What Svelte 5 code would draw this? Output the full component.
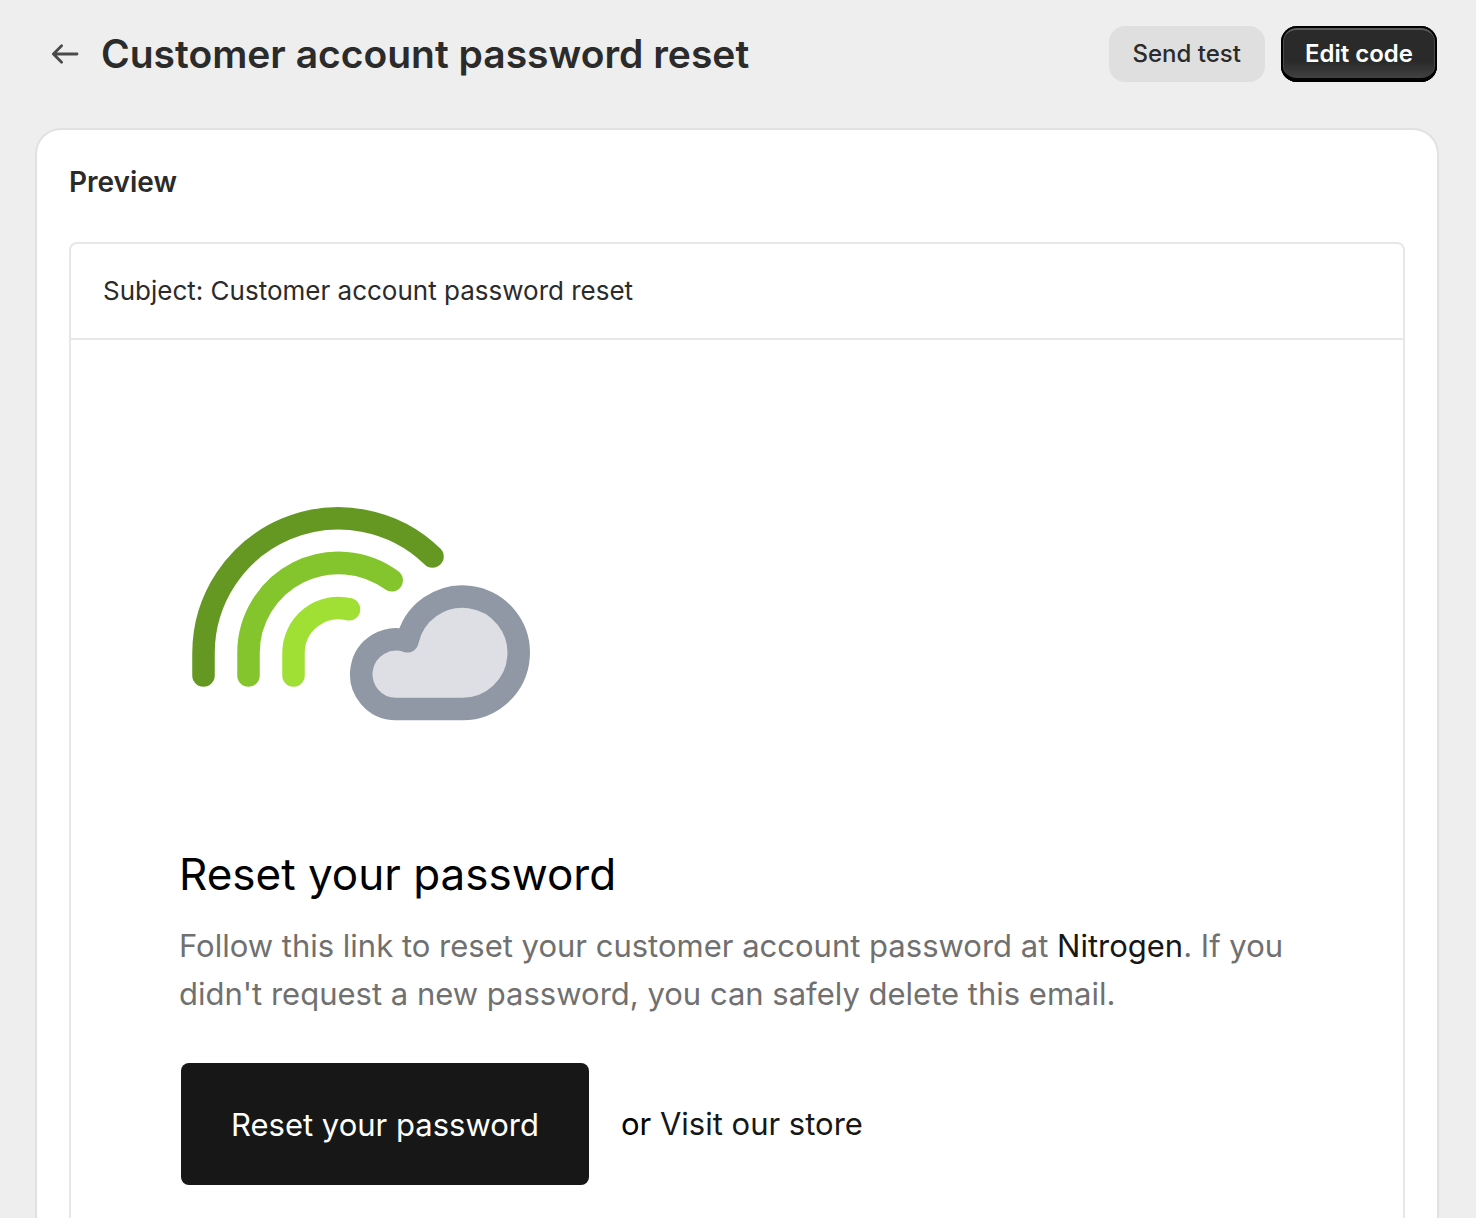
<script>
  const subject = 'Customer account password reset';
  const shop = 'Nitrogen';
</script>

<div class="page">
  <header class="topbar">
    <a class="back" href="#notifications" aria-label="Back to notifications">
      <svg width="28" height="24" viewBox="0 0 28 24" fill="none" stroke="#4a4a4a" stroke-width="2.8" stroke-linecap="round" stroke-linejoin="round" aria-hidden="true">
        <path d="M26 12H2.4M10.6 3.8L2.4 12l8.2 8.2" />
      </svg>
    </a>
    <h1>{subject}</h1>
    <div class="actions">
      <button class="btn" type="button">Send test</button>
      <button class="btn primary" type="button">Edit code</button>
    </div>
  </header>

  <main class="card">
    <h2>Preview</h2>
    <section class="mail">
      <p class="subject">Subject: {subject}</p>
      <div class="content">
        <svg class="logo" viewBox="180 432 360 360" fill="none" stroke-width="22.5" stroke-linecap="round" stroke-linejoin="round" role="img" aria-label={shop}>
          <path stroke="#659822" d="M203.5 675.5V653A135 135 0 0 1 432.5 556.5" />
          <path stroke="#84c42c" d="M248.5 675.5V653A90 90 0 0 1 391.7 580.3" />
          <path stroke="#a0df33" d="M293.5 675.5V653A45 45 0 0 1 349 609.3" />
          <path fill="#dddfe4" stroke="#9097a5" d="M396 709H462.3A56.25 56.25 0 1 0 407.4 641.3A34.8 34.8 0 1 0 396 709Z" />
        </svg>
        <h3>Reset your password</h3>
        <p class="message">
          Follow this link to reset your customer account password at <a href="#shop">{shop}</a>. If you didn't request a new password, you can safely delete this email.
        </p>
        <div class="links">
          <a class="reset" href="#reset">Reset your password</a>
          <p class="alt">or <a href="#store">Visit our store</a></p>
        </div>
      </div>
    </section>
  </main>
</div>

<style>
  :global(body) {
    margin: 0;
    background: #eeeeee;
  }

  .page {
    box-sizing: border-box;
    height: 100vh;
    overflow: hidden;
    display: flex;
    flex-direction: column;
    padding: 26px 37px 0 35px;
    font-family: Inter, 'Liberation Sans', sans-serif;
    color: #2b2b2b;
  }

  h1, h2, h3, p {
    margin: 0;
  }

  a {
    color: #171717;
    text-decoration: none;
  }

  .topbar {
    display: flex;
    align-items: center;
    flex: none;
    padding: 0 2px 0 16px;
    margin-bottom: 46px;
  }

  .back {
    display: flex;
    margin-right: 22px;
  }

  h1 {
    flex: 1;
    font-size: 39px;
    line-height: 56px;
    font-weight: 600;
  }

  .actions {
    display: flex;
    gap: 16px;
  }

  .btn {
    height: 56px;
    padding: 0 24px;
    border: 0;
    border-radius: 16px;
    background: #dfdfdf;
    color: #2b2b2b;
    font: 550 24px/40px Inter, 'Liberation Sans', sans-serif;
  }

  .primary {
    background: linear-gradient(#2a2a2a 63%, #444444 97%);
    color: #ffffff;
    font-weight: 600;
    box-shadow:
      inset 0 0 0 2px #000000,
      inset 0 -4px 0 0 #050505,
      inset 0 4px 0 0 #5c5c5c,
      inset 3px 0 0 0 #4b4b4b,
      inset -3px 0 0 0 #4b4b4b;
  }

  .card {
    flex: 1 0 auto;
    padding: 32px 32px 0;
    border: 2px solid #e1e1e1;
    border-bottom: 0;
    border-radius: 26px 26px 0 0;
    background: #ffffff;
  }

  h2 {
    margin-bottom: 40px;
    font-size: 28px;
    line-height: 40px;
    font-weight: 600;
  }

  .mail {
    border: 2px solid #e7e7e7;
    border-radius: 8px;
  }

  .subject {
    padding: 27px 32px;
    border-bottom: 2px solid #e7e7e7;
    font-size: 26px;
    line-height: 40px;
  }

  .content {
    max-width: 1116px;
    margin: 0 auto;
    padding: 92px 0 80px;
  }

  .logo {
    display: block;
    width: 360px;
    height: 360px;
    margin: 0 1px 52px;
  }

  h3 {
    margin-bottom: 18px;
    color: #000000;
    font-size: 44px;
    line-height: 60px;
    font-weight: 400;
  }

  .message {
    color: #707070;
    font-size: 31px;
    line-height: 48px;
  }

  .links {
    display: flex;
    align-items: center;
    gap: 32px;
    margin: 45px 2px 0;
  }

  .reset {
    padding: 38px 50px 36px;
    border-radius: 8px;
    background: #171717;
    color: #ffffff;
    font-size: 31px;
    line-height: 48px;
  }

  .alt {
    color: #000000;
    font-size: 31px;
    line-height: 48px;
  }
</style>
